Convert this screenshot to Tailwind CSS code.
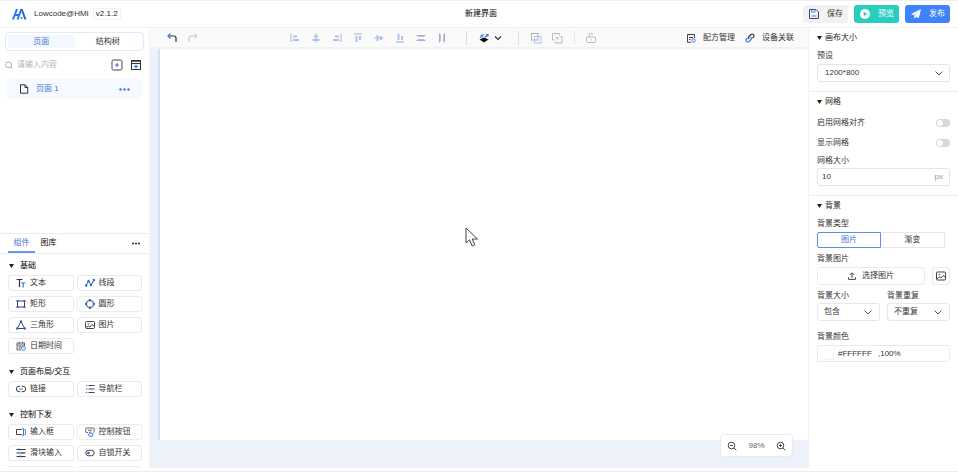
<!DOCTYPE html>
<html lang="zh-CN">
<head>
  <meta charset="UTF-8" />
  <meta name="viewport" content="width=device-width, initial-scale=1.0"/>
  <title>Lowcode@HMI - 新建界面</title>
  <script src="https://cdn.jsdelivr.net/npm/@tailwindcss/browser@4"></script>
</head>
<body class="h-screen flex flex-col overflow-hidden bg-white text-[#333] text-[8px] leading-3 font-['Liberation_Sans','Noto_Sans_CJK_SC',sans-serif]">

  <!-- header -->
  <header class="h-7 shrink-0 grid grid-cols-3 items-center border-t border-b border-[#efefef] pl-3 pr-2">
    <div class="flex items-center">
      <svg class="w-[15px] h-3" viewBox="0 0 15 12" fill="none" stroke-width="2">
        <path d="M1 11.500 5 1M5.500 11.500 9.500 1M3 7h4" stroke="#2f74ee"/>
        <path d="M9.500 1 13.500 11.500" stroke="#2b62e0"/>
        <path d="M8.500 10h2" stroke="#22c3c0"/>
      </svg>
      <span class="ml-[7px]">Lowcode@HMI</span>
      <span class="ml-1 border border-[#f2f2f2] px-[2px] leading-[10px] text-[#222]">v2.1.2</span>
    </div>
    <h1 class="text-center text-black">新建界面</h1>
    <div class="flex justify-end gap-1.5">
      <button class="w-[45px] h-[18px] rounded-[3px] bg-[#f2f2f2] flex items-center justify-between px-[5px]">
        <svg class="w-[12px] h-[12px]" viewBox="0 0 12 12" fill="none" stroke="#3a4763">
          <path d="M1.500 1.500h6.500l2.500 2.500v6.500h-9z"/>
          <path d="M3.500 1.500v2.500h3.500v-2.500M3.500 8h5" stroke="#4a82f0"/>
        </svg>
        保存
      </button>
      <button class="w-[45px] h-[18px] rounded-[3px] bg-[#29cdbd] text-white flex items-center justify-between px-[5px]">
        <svg class="w-[12px] h-[12px]" viewBox="0 0 12 12">
          <circle cx="6" cy="6" r="5" fill="#fff"/>
          <path d="M4.700 3.700 8.300 6 4.700 8.300z" fill="#29cdbd"/>
        </svg>
        预览
      </button>
      <button class="w-[45px] h-[18px] rounded-[3px] bg-[#3e83fb] text-white flex items-center justify-between px-[5px]">
        <svg class="w-[12px] h-[12px]" viewBox="0 0 12 12" fill="#fff">
          <path d="M11 1 1 6l2.700 1.300zM11 1 4.300 7.600v3.400l1.700-2.300 2.800 1.500z"/>
        </svg>
        发布
      </button>
    </div>
  </header>

  <div class="flex-1 min-h-0 flex">

    <!-- left sidebar -->
    <aside class="w-[150px] shrink-0 flex flex-col overflow-hidden border-r border-[#f5f5f5]">
      <section class="h-[205px] shrink-0 px-[5px] pt-1">
        <div class="h-[19px] grid grid-cols-2 border border-[#e2e9f8] rounded-[4px] p-[2px]">
          <button class="bg-[#f3f7fe] text-[#3f76d6] rounded-[2px]">页面</button>
          <button>结构树</button>
        </div>
        <div class="h-7 flex items-center gap-[7px] pr-[2px]">
          <svg class="w-2 h-2 shrink-0" viewBox="0 0 8 8" fill="none" stroke="#999" stroke-width=".8"><circle cx="3.600" cy="3.800" r="3"/><path d="m5.800 6 1.600 1.600"/></svg>
          <input type="text" aria-label="搜索页面" placeholder="请输入内容" class="flex-1 min-w-0 -ml-[3px] outline-none placeholder:text-[#b5b5b5]" />
          <button aria-label="新建页面">
            <svg class="block w-3 h-3" viewBox="0 0 12 12" fill="none" stroke="#444"><rect x="1" y="1" width="10" height="10" rx="1.500"/><path d="M6 4v4M4 6h4" stroke="#3f76e6" stroke-width="1.200"/></svg>
          </button>
          <button aria-label="新建分组">
            <svg class="block w-3 h-3" viewBox="0 0 12 12" fill="none" stroke="#333"><rect x="1.500" y="1.500" width="9" height="9"/><path d="M1 2h10" stroke-width="1.500"/><path d="M1.500 4.500h9"/><path d="M6 5.500v4M4 7.500h4" stroke="#3f76e6" stroke-width="1.200"/></svg>
          </button>
        </div>
        <div class="h-[20px] mx-[2px] flex items-center bg-[#f6f9ff] rounded-[2px] px-3 text-[#3f76d6]">
          <svg class="w-[10px] h-[10px]" viewBox="0 0 10 10" fill="none" stroke="#333"><path d="M1.500.8h4.700l2.500 2.500v5.900h-7.200z"/><path d="M6 1v2.500h2.500"/></svg>
          <span class="ml-[7px]">页面 1</span>
          <button class="ml-auto" aria-label="更多">
            <svg class="w-[11px] h-[3px]" viewBox="0 0 11 3" fill="#3f76e6"><circle cx="1.500" cy="1.500" r="1.200"/><circle cx="5.500" cy="1.500" r="1.200"/><circle cx="9.500" cy="1.500" r="1.200"/></svg>
          </button>
        </div>
      </section>

      <section class="border-t border-[#eee] flex-1 min-h-0">
        <div class="h-[20px] flex border-b border-[#eee] pl-2 pr-[9px]">
          <button class="w-[27px] border-b-2 border-[#6c98ea] text-[#3f76d6]">组件</button>
          <button class="w-[27px] border-b-2 border-transparent text-[#111]">图库</button>
          <button class="ml-auto" aria-label="更多">
            <svg class="w-2 h-[3px]" viewBox="0 0 8 3" fill="#222"><circle cx="1" cy="1.500" r="1"/><circle cx="4" cy="1.500" r="1"/><circle cx="7" cy="1.500" r="1"/></svg>
          </button>
        </div>

        <div class="pl-2 pr-[7px] pt-px">
          <h2 class="h-5 pt-[2px] flex items-center gap-1.5 pl-[1px] text-black"><svg class="w-[5px] h-[4px]" viewBox="0 0 5 4" fill="#222"><path d="M0 0h5L2.500 4z"/></svg>基础</h2>
          <div class="grid grid-cols-2 gap-x-[3px] gap-y-[5px]">
            <button class="h-4 flex items-center gap-1 border border-[#ebebeb] rounded-[3px] pl-[7px]">
              <svg class="w-[10px] h-[10px]" viewBox="0 0 10 10" fill="none" stroke="#333" stroke-width="1.200"><path d="M.5 1.500h6M3.500 1.500v7.500"/><path d="M5 5h4.500M7.200 5v4.500" stroke="#3f76e6"/></svg>文本
            </button>
            <button class="h-4 flex items-center gap-1 border border-[#ebebeb] rounded-[3px] pl-[7px]">
              <svg class="w-[10px] h-[10px]" viewBox="0 0 10 10" fill="#2f62d0"><path d="M1 7.500 3.500 3l2.500 4 3-5" fill="none" stroke="#2f4f9f"/><circle cx="1.200" cy="7.500" r="1.200"/><circle cx="3.500" cy="3" r="1.200"/><circle cx="6" cy="7" r="1.200"/><circle cx="8.800" cy="2" r="1.200"/></svg>线段
            </button>
            <button class="h-4 flex items-center gap-1 border border-[#ebebeb] rounded-[3px] pl-[7px]">
              <svg class="w-[10px] h-[10px]" viewBox="0 0 10 10" fill="#2f62d0"><rect x="1.500" y="2" width="7" height="6" fill="none" stroke="#444"/><path d="M.5 1h2v2h-2zM7.500 1h2v2h-2zM.5 7h2v2h-2zM7.500 7h2v2h-2z"/></svg>矩形
            </button>
            <button class="h-4 flex items-center gap-1 border border-[#ebebeb] rounded-[3px] pl-[7px]">
              <svg class="w-[10px] h-[10px]" viewBox="0 0 10 10" fill="#2f62d0"><circle cx="5" cy="5" r="3.700" fill="none" stroke="#444"/><circle cx="5" cy="1.200" r="1.200"/><circle cx="5" cy="8.800" r="1.200"/><circle cx="1.200" cy="5" r="1.200"/><circle cx="8.800" cy="5" r="1.200"/></svg>圆形
            </button>
            <button class="h-4 flex items-center gap-1 border border-[#ebebeb] rounded-[3px] pl-[7px]">
              <svg class="w-[10px] h-[10px]" viewBox="0 0 10 10" fill="#2f62d0"><path d="M5 1.500 8.700 8.500H1.300z" fill="none" stroke="#444"/><circle cx="5" cy="1.500" r="1.200"/><circle cx="1.200" cy="8.500" r="1.200"/><circle cx="8.800" cy="8.500" r="1.200"/></svg>三角形
            </button>
            <button class="h-4 flex items-center gap-1 border border-[#ebebeb] rounded-[3px] pl-[7px]">
              <svg class="w-[10px] h-[10px]" viewBox="0 0 10 10" fill="none" stroke="#444"><rect x=".5" y="1.500" width="9" height="7" rx="1"/><path d="m1 7.500 2.500-1.500 1.500 1 2-2.500 2 1.500"/><circle cx="3.300" cy="3.700" r=".5" stroke="#3f76e6"/></svg>图片
            </button>
            <button class="h-4 flex items-center gap-1 border border-[#ebebeb] rounded-[3px] pl-[7px]">
              <svg class="w-[10px] h-[10px]" viewBox="0 0 10 10" fill="none" stroke="#555" stroke-width=".9"><path d="M8.500 5V2h-7.500v7h4M1 4h7.500M3.200.7v2M6.500.7v2M2.500 5.700h3M2.500 7.300h2"/><circle cx="7.400" cy="7.300" r="2" stroke="#3f76e6"/><path d="M7.400 6.300v1h.9" stroke="#3f76e6" stroke-width=".6"/></svg>日期时间
            </button>
          </div>

          <h2 class="h-5 mt-[7px] pt-[2px] flex items-center gap-1.5 pl-[1px] text-black"><svg class="w-[5px] h-[4px]" viewBox="0 0 5 4" fill="#222"><path d="M0 0h5L2.500 4z"/></svg>页面布局/交互</h2>
          <div class="grid grid-cols-2 gap-x-[3px] gap-y-[5px]">
            <button class="h-4 flex items-center gap-1 border border-[#ebebeb] rounded-[3px] pl-[7px]">
              <svg class="w-[10px] h-[10px]" viewBox="0 0 10 10" fill="none" stroke="#444"><path d="M4.300 2.300H3a2.600 2.600 0 0 0 0 5.400h1.300M5.700 2.300H7a2.600 2.600 0 0 1 0 5.400H5.700"/><path d="M3 5h4" stroke="#3f76e6"/></svg>链接
            </button>
            <button class="h-4 flex items-center gap-1 border border-[#ebebeb] rounded-[3px] pl-[7px]">
              <svg class="w-[10px] h-[10px]" viewBox="0 0 10 10" fill="none" stroke="#444"><path d="M3.500 1.500H9.500M3.500 5H9.500M3.500 8.500H9.500"/><path d="M.8 1.500h1.500M.8 5h1.500M.8 8.500h1.500" stroke="#3f76e6"/></svg>导航栏
            </button>
          </div>

          <h2 class="h-5 mt-[7px] pt-[2px] flex items-center gap-1.5 pl-[1px] text-black"><svg class="w-[5px] h-[4px]" viewBox="0 0 5 4" fill="#222"><path d="M0 0h5L2.500 4z"/></svg>控制下发</h2>
          <div class="grid grid-cols-2 gap-x-[3px] gap-y-[5px]">
            <button class="h-4 flex items-center gap-1 border border-[#ebebeb] rounded-[3px] pl-[7px]">
              <svg class="w-[10px] h-[10px]" viewBox="0 0 10 10" fill="none" stroke="#444"><path d="M6 2.500H.5v5H6"/><path d="M6 1h.7q.8 0 .8.800v6.400q0 .8-.8.800H6M8.300 2.500h.8q.5 0 .5.500v4q0 .5-.5.500h-.8" stroke="#3f76e6"/></svg>输入框
            </button>
            <button class="h-4 flex items-center gap-1 border border-[#ebebeb] rounded-[3px] pl-[7px]">
              <svg class="w-[10px] h-[10px]" viewBox="0 0 10 10" fill="none" stroke="#555" stroke-width=".9"><path d="M3 5.500H1.500q-.7 0-.7-.7V1.700q0-.7.700-.7h7q.7 0 .7.700v3.100q0 .7-.7.700M3 3.200h4"/><path d="M4.500 7V5q.8-.8 1.300 0v1.200l2.200.6-.4 2.500H4.500L3 7.500z" stroke="#3f76e6"/></svg>控制按钮
            </button>
            <button class="h-4 flex items-center gap-1 border border-[#ebebeb] rounded-[3px] pl-[7px]">
              <svg class="w-[10px] h-[10px]" viewBox="0 0 10 10" fill="none" stroke="#333"><path d="M.5 1.500h9M.5 5h9M.5 8.500h9"/><path d="M3 .5v2M6.500 4v2M4.500 7.500v2" stroke="#3f76e6" stroke-width="1.500"/></svg>滑块输入
            </button>
            <button class="h-4 flex items-center gap-1 border border-[#ebebeb] rounded-[3px] pl-[7px]">
              <svg class="w-[10px] h-[10px]" viewBox="0 0 10 10" fill="none" stroke="#444"><rect x=".8" y="2.300" width="8.400" height="5.400" rx="2.700"/><circle cx="3.500" cy="5" r="1.300" fill="#2f62d0" stroke="none"/></svg>自锁开关
            </button>
            <button class="h-4 border border-[#ebebeb] rounded-[3px]" aria-label="开关"></button>
            <button class="h-4 border border-[#ebebeb] rounded-[3px]" aria-label="下拉框"></button>
          </div>
        </div>
      </section>
    </aside>

    <!-- canvas area -->
    <main class="flex-1 min-w-0 flex flex-col relative">
      <div class="h-[21px] shrink-0 flex items-center justify-between bg-[#fafafa] border-b-2 border-[#f2f2f2] pl-4 pr-[14px]">
        <div class="flex gap-[9px]">
          <button aria-label="撤销"><svg class="block w-3 h-3" viewBox="0 0 12 12" fill="none" stroke="#333" stroke-width="1.200"><path d="M3 4h5q2 0 2 2v4"/><path d="M4.500 1.500 2 4l2.500 2.500" stroke="#3f76e6"/></svg></button>
          <button aria-label="重做"><svg class="block w-3 h-3" viewBox="0 0 12 12" fill="none" stroke="#bbb"><path d="M9 4H4Q2 4 2 6v4"/><path d="M7.500 1.500 10 4 7.500 6.500" stroke="#b3c5ea"/></svg></button>
        </div>

        <div class="flex items-center">
          <div class="flex gap-[9px]">
            <button aria-label="左对齐"><svg class="block w-3 h-3" viewBox="0 0 12 12"><path d="M2 2v8" stroke="#b0b0b0"/><path d="M4 4.500h4M4 8h6" stroke="#a9c3f5" stroke-width="2"/></svg></button>
            <button aria-label="水平居中"><svg class="block w-3 h-3" viewBox="0 0 12 12"><path d="M6 1.500v9" stroke="#b0b0b0"/><path d="M4 4.500h4M2.500 8h7" stroke="#a9c3f5" stroke-width="2"/></svg></button>
            <button aria-label="右对齐"><svg class="block w-3 h-3" viewBox="0 0 12 12"><path d="M10 2v8" stroke="#b0b0b0"/><path d="M4 4.500h4M2 8h6" stroke="#a9c3f5" stroke-width="2"/></svg></button>
            <button aria-label="顶对齐"><svg class="block w-3 h-3" viewBox="0 0 12 12"><path d="M2 2h8" stroke="#b0b0b0"/><path d="M4.500 4v6M8 4v4" stroke="#a9c3f5" stroke-width="2"/></svg></button>
            <button aria-label="垂直居中"><svg class="block w-3 h-3" viewBox="0 0 12 12"><path d="M1.500 6h9" stroke="#b0b0b0"/><path d="M4.500 3v6M8 4v4" stroke="#a9c3f5" stroke-width="2"/></svg></button>
            <button aria-label="底对齐"><svg class="block w-3 h-3" viewBox="0 0 12 12"><path d="M2 10h8" stroke="#b0b0b0"/><path d="M4.500 2v6M8 4v4" stroke="#a9c3f5" stroke-width="2"/></svg></button>
            <button aria-label="垂直等距"><svg class="block w-3 h-3" viewBox="0 0 12 12"><path d="M1.500 3.500h9M1.500 8.500h9" stroke="#b0b0b0"/><path d="M2.500 4.500h7M2.500 7.500h7" stroke="#a9c3f5"/></svg></button>
            <button aria-label="水平等距"><svg class="block w-3 h-3" viewBox="0 0 12 12"><path d="M3.500 1.500v9M8.500 1.500v9" stroke="#b0b0b0"/><path d="M4.500 2.500v7M7.500 2.500v7" stroke="#a9c3f5"/></svg></button>
          </div>
          <span class="w-px h-[14px] bg-[#d3def5] ml-[18px] mr-3"></span>
          <button class="flex items-center gap-[5px]" aria-label="层级">
            <svg class="w-[10px] h-[10px]" viewBox="0 0 10 10"><path d="M5 4.500 9.500 6.500 5 9.500.5 6.500z" fill="#111"/><path d="M1 4.500 4 3.200M1.500 2.800 5 1.500M7 1.500h2v2M9 1.500 6 4.500" stroke="#3f76e6" stroke-width="1.200" fill="none"/></svg>
            <svg class="w-2 h-2" viewBox="0 0 8 8" fill="none" stroke="#333" stroke-width="1.200"><path d="m1 2.500 3 3 3-3"/></svg>
          </button>
          <span class="w-px h-[14px] bg-[#d3def5] ml-4 mr-[11px]"></span>
          <div class="flex gap-[9px]">
            <button aria-label="组合"><svg class="block w-3 h-3" viewBox="0 0 12 12" fill="none"><rect x="1.500" y="1.500" width="6.500" height="6.500" stroke="#b0b0b0"/><rect x="4.500" y="4.500" width="6.500" height="6.500" stroke="#a9c3f5"/></svg></button>
            <button aria-label="取消组合"><svg class="block w-3 h-3" viewBox="0 0 12 12" fill="none" stroke="#b8b8b8"><path d="M3.500 8h-2V1.500h7v2M9.500 4.500h1.500v6.500h-6.500V9.500"/><path d="m4.500 4.500 3 3M7.500 4.500l-3 3" stroke="#a9c3f5"/></svg></button>
          </div>
          <span class="w-px h-[14px] bg-[#e3e9f5] ml-[11px] mr-[10px]"></span>
          <button aria-label="锁定"><svg class="block w-3 h-3" viewBox="0 0 12 12" fill="none" stroke="#bbb"><rect x="1.500" y="5" width="9" height="5.500" rx="1"/><path d="M4 5V3.500Q4 1.500 6 1.500 7.500 1.500 8 3M6 7v1.500"/></svg></button>
        </div>

        <div class="flex items-center gap-[10px]">
          <button class="flex items-center gap-[7px]">
            <svg class="w-[10px] h-[10px]" viewBox="0 0 10 10" fill="none" stroke="#444"><path d="M8.500 5V1.500h-7v7.800h3.500M3 .8v1.500M7 .8v1.500M3 4.500h4M3 6.500h1.500"/><circle cx="7.500" cy="7.500" r="1.600" stroke="#3f76e6"/></svg>配方管理
          </button>
          <button class="flex items-center gap-[7px]">
            <svg class="w-[10px] h-[10px]" viewBox="0 0 10 10" fill="none" stroke-width="1.200"><path d="M4.200 5.800Q3 4.500 4 3.500l2-2Q7.200.5 8.500 1.500 9.500 2.800 8.500 4L7.500 5" stroke="#333"/><path d="M5.800 4.200Q7 5.500 6 6.500l-2 2Q2.800 9.500 1.500 8.500.5 7.200 1.500 6l1-1" stroke="#3f76e6"/></svg>设备关联
          </button>
        </div>
      </div>

      <div class="flex-1 bg-[#edf1fa] pl-2 pb-[28px]">
        <div class="h-full bg-white border-l-2 border-[#d5e0f6]"></div>
      </div>

      <!-- zoom control -->
      <div class="absolute right-[15px] bottom-[11px] w-[73px] h-[23px] flex items-center justify-between px-[6px] bg-white border border-[#e8ebf2] rounded-[4px] text-[#666]">
        <button aria-label="缩小"><svg class="block w-[10px] h-[10px]" viewBox="0 0 10 10" fill="none" stroke="#444"><circle cx="4.500" cy="4.500" r="3.300"/><path d="m7 7 2.300 2.300M3 4.500h3"/></svg></button>
        <span>98%</span>
        <button aria-label="放大"><svg class="block w-[10px] h-[10px]" viewBox="0 0 10 10" fill="none" stroke="#444"><circle cx="4.500" cy="4.500" r="3.300"/><path d="m7 7 2.300 2.300M3 4.500h3M4.500 3v3"/></svg></button>
      </div>

      <!-- pointer -->
      <svg class="absolute left-[315px] top-[199px] w-[14px] h-[20px]" viewBox="0 0 14 20" fill="#fff" stroke="#444"><path d="M1 1v15l3.500-3.200L7.200 19l2.500-1.200L7.200 12H12.500z"/></svg>
    </main>

    <!-- properties -->
    <aside class="w-[150px] shrink-0 border-l border-[#f2f2f2] overflow-hidden">
      <section class="px-2 pb-[9px]">
        <h2 class="h-[18px] pt-[2px] flex items-center gap-[3px] text-[#222]"><svg class="w-[5px] h-[4px]" viewBox="0 0 5 4" fill="#222"><path d="M0 0h5L2.500 4z"/></svg>画布大小</h2>
        <label for="preset" class="block mt-1">预设</label>
        <div class="relative mt-[2px]">
          <select id="preset" class="block w-full h-[18px] appearance-none border border-[#e5e5e5] rounded-[3px] px-[7px] bg-white"><option>1200*800</option></select>
          <svg class="absolute right-[7px] top-[5px] w-2 h-2 pointer-events-none" viewBox="0 0 8 8" fill="none" stroke="#555"><path d="M.5 2.500 4 6 7.500 2.500"/></svg>
        </div>
      </section>

      <section class="border-t border-[#eee] px-2 pb-[9px]">
        <h2 class="h-[18px] pt-[2px] flex items-center gap-[3px] text-[#222]"><svg class="w-[5px] h-[4px]" viewBox="0 0 5 4" fill="#222"><path d="M0 0h5L2.500 4z"/></svg>网格</h2>
        <label class="h-5 mt-[3px] flex items-center justify-between">启用网格对齐
          <input type="checkbox" class="appearance-none w-[14px] h-2 rounded-full bg-[#d8d8dc] p-px before:block before:w-[6px] before:h-[6px] before:rounded-full before:bg-white checked:bg-[#3e83fb]" />
        </label>
        <label class="h-5 flex items-center justify-between">显示网格
          <input type="checkbox" class="appearance-none w-[14px] h-2 rounded-full bg-[#d8d8dc] p-px before:block before:w-[6px] before:h-[6px] before:rounded-full before:bg-white checked:bg-[#3e83fb]" />
        </label>
        <label for="gridSize" class="block mt-[2px]">网格大小</label>
        <div class="h-[18px] mt-px flex items-center border border-[#e5e5e5] rounded-[3px] pl-1 pr-[6px]">
          <input id="gridSize" type="text" value="10" class="flex-1 min-w-0 outline-none" />
          <span class="text-[#999]">px</span>
        </div>
      </section>

      <section class="border-t border-[#eee] px-2">
        <h2 class="h-[18px] pt-[2px] flex items-center gap-[3px] text-[#222]"><svg class="w-[5px] h-[4px]" viewBox="0 0 5 4" fill="#222"><path d="M0 0h5L2.500 4z"/></svg>背景</h2>
        <p class="mt-1">背景类型</p>
        <div class="grid grid-cols-2 h-4 mt-[2px] mr-[5px]">
          <button class="border border-[#5f8fdf] rounded-l-[2px] text-[#3f76d6] leading-[14px]">图片</button>
          <button class="border border-l-0 border-[#e8e8e8] rounded-r-[2px] leading-[14px]">渐变</button>
        </div>

        <p class="mt-[5px]">背景图片</p>
        <div class="flex gap-[7px] mt-[2px]">
          <button class="flex-1 h-[18px] flex items-center justify-center gap-1.5 border border-[#ebebeb] rounded-[3px]">
            <svg class="w-2 h-2" viewBox="0 0 8 8" fill="none" stroke="#444"><path d="M4 6V1M2 2.800 4 .8 6 2.800M.6 5.200v2.200h6.800V5.200"/></svg>选择图片
          </button>
          <button class="w-[18px] h-[18px] flex items-center justify-center border border-[#ebebeb] rounded-[3px]" aria-label="图库">
            <svg class="w-[10px] h-[10px]" viewBox="0 0 10 10" fill="none" stroke="#444"><rect x=".5" y="1" width="9" height="8" rx="1"/><path d="m1 7.500 2.500-1.500 1.500 1 2-2.500 2 1.500"/><circle cx="3.300" cy="3.700" r=".5" stroke="#3f76e6"/></svg>
          </button>
        </div>

        <div class="grid grid-cols-2 gap-[7px] mt-[5px]">
          <div>
            <label for="bgSize" class="block">背景大小</label>
            <div class="relative mt-px">
              <select id="bgSize" class="block w-full h-[18px] appearance-none border border-[#e8e8e8] rounded-[3px] px-[6px] bg-white"><option>包含</option></select>
              <svg class="absolute right-2 top-[5px] w-2 h-2 pointer-events-none" viewBox="0 0 8 8" fill="none" stroke="#555"><path d="M.5 2.500 4 6 7.500 2.500"/></svg>
            </div>
          </div>
          <div>
            <label for="bgRepeat" class="block">背景重复</label>
            <div class="relative mt-px">
              <select id="bgRepeat" class="block w-full h-[18px] appearance-none border border-[#e8e8e8] rounded-[3px] px-[6px] bg-white"><option>不重复</option></select>
              <svg class="absolute right-2 top-[5px] w-2 h-2 pointer-events-none" viewBox="0 0 8 8" fill="none" stroke="#555"><path d="M.5 2.500 4 6 7.500 2.500"/></svg>
            </div>
          </div>
        </div>

        <label for="bgColor" class="block mt-[10px]">背景颜色</label>
        <div class="h-[17px] mt-[2px] flex items-center border border-[#ebebeb] rounded-[3px] pl-1">
          <span class="w-3 h-3 bg-white border-r border-b border-[#f0f0f0]"></span>
          <input id="bgColor" type="text" value="#FFFFFF" class="w-9 ml-1 outline-none" />
          <input type="text" aria-label="不透明度" value=",100%" class="w-9 ml-1 outline-none" />
        </div>
      </section>
    </aside>
  </div>

  <footer class="h-1 shrink-0 border-b border-[#eee]"></footer>
</body>
</html>
